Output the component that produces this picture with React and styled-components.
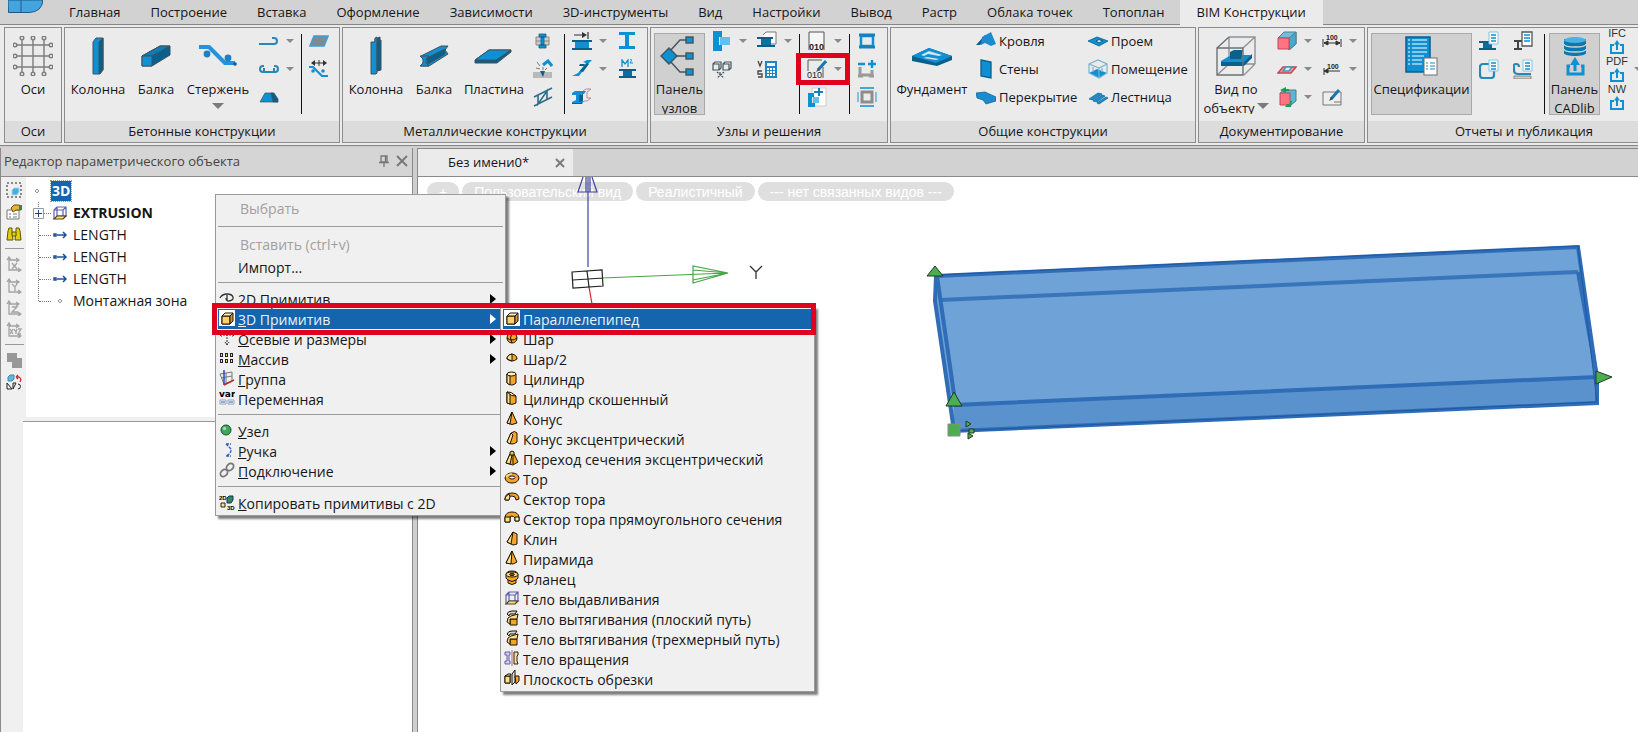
import React, { useState } from 'react'
import styled, { createGlobalStyle } from 'styled-components';

const BLUE = '#0e90d2'
const DARK = '#0b5f8b'
const EDGE = '#41535e'
const GOLD = '#f5a52a'
const CREAM = '#ffe08a'

// 40x40 drawings for the large ribbon buttons
const bigIcons = {
    axes: (
        <g fill="none" stroke="#7d7d7d" strokeWidth="1.4">
            <path d="M4 9H36M4 20H36M4 31H36M9 4V36M20 4V36M31 4V36" />
            {[9, 20, 31].map((n) => (
                <g key={n} fill="#eee">
                    <circle cx={n} cy="2" r="1.8" /><circle cx={n} cy="38" r="1.8" />
                    <circle cx="2" cy={n} r="1.8" /><circle cx="38" cy={n} r="1.8" />
                </g>
            ))}
        </g>
    ),
    column: (
        <g stroke={EDGE} strokeWidth="1">
            <path d="M15 6l3-4h7v32l-3 4h-7z" fill={BLUE} />
            <path d="M21 6l4-4v32l-4 4z" fill={DARK} />
        </g>
    ),
    beam: (
        <g stroke={EDGE} strokeWidth="1">
            <path d="M6 20l18-10h10v9l-18 11H6z" fill={DARK} />
            <path d="M6 20l18-10h10L16 20z" fill="#0b7cb5" />
            <path d="M6 20h10v10H6z" fill={BLUE} />
        </g>
    ),
    rebar: (
        <g>
            <path d="M1 11h10l16 16h10" fill="none" stroke="#2593dc" strokeWidth="4" strokeLinejoin="round" />
            <circle cx="9" cy="18" r="3.4" fill="#1a82c4" />
            <circle cx="30" cy="22" r="3.4" fill="#1a82c4" />
            <circle cx="37" cy="28" r="1.8" fill={DARK} />
        </g>
    ),
    steelColumn: (
        <g stroke={EDGE} strokeWidth="1">
            <path d="M19 3l5-2v33l-5 1z" fill={DARK} />
            <path d="M15 6h4V2l2-1v36l-1 1h-5z" fill={BLUE} />
            <path d="M21 6l4-2v30l-4 1z" fill={DARK} />
        </g>
    ),
    steelBeam: (
        <g stroke={EDGE} strokeWidth="1">
            <path d="M7 20l20-10h7l-3 4 3 4-19 12H7l3-5z" fill={BLUE} />
            <path d="M13 22l18-9v5l-17 10z" fill={DARK} />
            <path d="M6 20h9l-3 3v4l3 3H6l3-3v-4z" fill={BLUE} />
        </g>
    ),
    plate: (
        <g stroke={EDGE} strokeWidth="1">
            <path d="M1 24L15 14h22v2L23 27H1z" fill={DARK} />
            <path d="M1 24L15 14h22L22 24z" fill={BLUE} />
        </g>
    ),
    nodes: (
        <g stroke={EDGE} strokeWidth="1.4">
            <path d="M10 15L20 4h8M14 20h14M10 25l10 11h8" fill="none" />
            <path d="M9 12l8 8-8 8-8-8z" fill={BLUE} />
            <rect x="26" y="1" width="7" height="6" fill={BLUE} />
            <rect x="26" y="17" width="7" height="6" fill={BLUE} />
            <rect x="26" y="33" width="7" height="6" fill={BLUE} />
        </g>
    ),
    foundation: (
        <g>
            <path d="M0 20l17-8 23 8v4L25 30 0 25z" fill={DARK} />
            <path d="M0 20l17-8 23 8-16 7z" fill={BLUE} />
            <path d="M9 19l8-4 13 4-3 1-11-2-4 2zM11 22l4-1 12 2-3 1z" fill="#d4e4ed" />
        </g>
    ),
    objectView: (
        <g stroke="#8f9396" strokeWidth="1.4" fill="none">
            <path d="M13 1h26v27M13 1v27h26M13 28L1 39M39 28l-11 11M39 1L27 12" />
            <path d="M5 25l10-6h20l-6 9H5z" fill={BLUE} stroke="none" />
            <path d="M5 26h23l8-8v4l-8 8H5z" fill={DARK} stroke="none" />
            <path d="M14 16l4-2h9l-2 9H14z" fill={DARK} stroke="none" />
            <path d="M1 12h26v27H1zM1 12L13 1" stroke="#6e7274" />
        </g>
    ),
    spec: (
        <g>
            <rect x="4" y="1" width="24" height="35" fill={BLUE} stroke={DARK} strokeWidth="1.5" />
            <path d="M6 4h2M10 4h15M6 8h2M10 8h15M6 12h2M10 12h15M6 16h2M10 16h15M6 20h2M10 20h12M6 24h2M10 24h10M6 28h2M10 28h10" stroke="#fff" strokeWidth="1.2" />
            <rect x="22" y="22" width="13" height="17" fill="#fff" stroke="#6f6f6f" />
            <path d="M24 27h2M28 27h5M24 30h2M28 30h5M24 33h2M28 33h5" stroke={BLUE} strokeWidth="1.2" />
        </g>
    ),
    cadlib: (
        <g>
            <path d="M9 3v14c0 4 22 4 22 0V3z" fill="#0b78b0" />
            <ellipse cx="20" cy="4" rx="11" ry="3" fill="#46b2e6" />
            <path d="M9 8c0 4 22 4 22 0M9 13c0 4 22 4 22 0" fill="none" stroke="#d4d4d4" strokeWidth="1.3" />
            <path d="M15 30h-2v8h15v-8h-2" fill="none" stroke={BLUE} strokeWidth="3" />
            <path d="M20 35V27" stroke={BLUE} strokeWidth="3" />
            <path d="M20 21l5 8H15z" fill={BLUE} />
        </g>
    ),
}

const exportArrow = (
    <g>
        <path d="M7 10H4v8h12v-8h-3" fill="none" stroke={BLUE} strokeWidth="2" />
        <path d="M10 15V9" stroke={BLUE} strokeWidth="2" />
        <path d="M10 5l3 4.500H7z" fill={BLUE} />
    </g>
)

// 20x20 drawings for the small ribbon buttons
const smallIcons = {
    hook: <path d="M0 13h15q3 0 3-3t-3-3h-2" fill="none" stroke="#2787b5" strokeWidth="2" />,
    clamp: <path d="M5 7H4q-3 0-3 3t3 3h12q3 0 3-3t-3-3h-1M5 9v3M15 9v3" fill="none" stroke="#2787b5" strokeWidth="2" />,
    slab: (
        <g stroke={EDGE} strokeWidth=".7">
            <path d="M1 15L6 6h8l5 9z" fill={BLUE} /><path d="M12 6h3l4 6v3h-5z" fill={DARK} />
        </g>
    ),
    surface: <path d="M5 5h14l-4 10H1z" fill="#808a90" stroke="#3aa0dc" strokeWidth="1.6" />,
    moveRebar: (
        <g>
            <path d="M3 4h14M10 1v6" stroke="#333" /><path d="M6 1v6L2 4zM14 1v6l4-3z" fill="#333" />
            <path d="M0 8h4l9 9h6" fill="none" stroke={BLUE} strokeWidth="2.2" />
            <circle cx="4" cy="12" r="1.800" fill={BLUE} /><circle cx="14" cy="12" r="1.8" fill={BLUE} />
        </g>
    ),
    bolt: (
        <g>
            <path d="M3 6h13v8H3zM3 10h13" fill="#ccc" stroke="#888" />
            <path d="M6 3h7v3H6zM6 14h7v3H6zM8 6h3v8H8z" fill={BLUE} stroke={DARK} strokeWidth=".8" />
        </g>
    ),
    weld: (
        <g>
            <path d="M0 13h19v6H0z" fill="#b9b9b9" /><path d="M7 12h5l-2 6z" fill={DARK} />
            <path d="M10 6l5-4 4 5" fill="none" stroke={BLUE} strokeWidth="3" />
            <path d="M4 3l3 4M3 9l4 1M10 8v3M14 9l-2 2" stroke="#777" />
        </g>
    ),
    truss: <path d="M1 10L19 1M1 19l18-9M5 8v9l9-13v8M1 10l4-2" fill="none" stroke="#2f6e8c" strokeWidth="1.6" />,
    trim: (
        <g>
            <path d="M0 9h20v2H0zM0 17h20v2H0z" fill={DARK} /><path d="M3 11h14v6H3z" fill={BLUE} />
            <path d="M2 4h10M16 1v7" stroke="#333" strokeWidth="1.2" /><path d="M10 1l5 3-5 3z" fill="#333" />
        </g>
    ),
    cut: (
        <g>
            <path d="M0 17l6-3 8-10-3-1 4-2h5l-3 3-7 9-3 4z" fill={BLUE} /><path d="M8 12l7-8 2 1-6 8zM8 5h5l-1 2H7z" fill={DARK} />
        </g>
    ),
    joint: (
        <g>
            <path d="M11 4l3-2h5l-4 3v6h4l-4 3h-3" fill="none" stroke="#b98a9c" />
            <path d="M0 6l3-2h11l-2 3H9v7h3l-2 3H0v-2l4-2V8H0z" fill={BLUE} /><path d="M7 8l4-1v7l-4 1zM0 16h10v1H0z" fill={DARK} />
        </g>
    ),
    profile: <path d="M2 1h16v3h-6v11h6v3H2v-3h6V4H2z" fill={BLUE} />,
    area: (
        <g>
            <path d="M2 10h17v2H2zM2 17h17v2H2z" fill={DARK} /><path d="M6 12h9v5H6z" fill="#0b6c9f" />
            <path d="M5 8V1l3 4 3-4v7" fill="none" stroke={BLUE} strokeWidth="1.3" /><path d="M13 0q3 0 0 4h3" fill="none" stroke={BLUE} />
        </g>
    ),
    library: <g><path d="M1 0h9v6H7v8h3v6H1z" fill={BLUE} /><path d="M8 6h10v8H8z" fill="#62c0ee" /></g>,
    sheetBeam: (
        <g>
            <path d="M6 4l3-3h10v12h-5" fill="#fff" stroke="#777" /><path d="M0 6h16v2H0zM0 14h18v2H0z" fill={DARK} /><path d="M4 8h10v6H4z" fill="#0b6f9f" />
        </g>
    ),
    cubes: (
        <g fill="none" stroke={EDGE} strokeWidth="1.2">
            <path d="M1 5h6v6H1zM11 5h6v6h-6zM1 5l2-2h6v6l-2 2M11 5l2-2h6v6l-2 2" />
            <path d="M5 13l7 6M12 13l-7 6M8 13v2" strokeDasharray="2 1" />
        </g>
    ),
    calculator: (
        <g>
            <path d="M1 2l2 5 2-5M5 12H1v3h4v3H1" fill="none" stroke="#444" strokeWidth="1.300" />
            <path d="M8 2h12v17H8z" fill="#1c87c2" />
            <path d="M10 4h8v3h-8zM10 9h2v2h-2zM13 9h2v2h-2zM16 9h2v2h-2zM10 12h2v2h-2zM13 12h2v2h-2zM16 12h2v2h-2zM10 15h2v2h-2zM13 15h2v2h-2zM16 15h2v2h-2z" fill="#fff" />
        </g>
    ),
    sheet: (
        <g>
            <path d="M2 19V1h15v18" fill="#f6f6f6" stroke="#555" />
            <text x="2" y="19" fontSize="9" fontFamily="Liberation Sans" fontWeight="700" fill="#222">010</text>
        </g>
    ),
    sheetEdit: (
        <g>
            <path d="M16 8v11M1 12V1h14" fill="none" stroke="#555" />
            <path d="M19 2l-8 9" stroke="#1876b4" strokeWidth="3" /><path d="M11 9l-2 4 4-2z" fill="#555" />
            <text x="0" y="19" fontSize="9" fontFamily="Liberation Sans" fill="#222">010</text>
        </g>
    ),
    sheetAdd: (
        <g>
            <path d="M5 1h14v18H5z" fill="#fff" stroke="#ccc" />
            <path d="M1 6h6v4H5v6h3v4H1z" fill={BLUE} /><path d="M6 10h6v6H6z" fill="#62c0ee" />
            <path d="M7 5h9M12 1v8" stroke="#1680bd" strokeWidth="2" />
        </g>
    ),
    frame: <g><path d="M4 5h12v10H4z" fill="none" stroke={BLUE} strokeWidth="2.500" /><path d="M2 4h16M2 16h16" stroke="#1680bd" strokeWidth="3" /></g>,
    frameAdd: <g><path d="M3 8v8h12v-5M1 17h5M12 17h5" fill="none" stroke="#9a9a9a" strokeWidth="3" /><path d="M11 5h8M15 1v8M1 5h7" stroke={BLUE} strokeWidth="2.4" /></g>,
    frameGroup: (
        <g fill="none">
            <path d="M5 5h10v10H5z" stroke="#8d8d8d" strokeWidth="3" /><path d="M3 1h14M3 19h14" stroke={BLUE} strokeWidth="1.6" /><path d="M1 5v10M19 5v10" stroke="#68b5df" strokeWidth="1.6" />
        </g>
    ),
    roof: <g><path d="M0 14L9 4l3 3-8 7z" fill={DARK} /><path d="M6 6l9-5 5 12-5 2-6-3-4 2z" fill="#1b8ccf" /></g>,
    wall: <path d="M5 1l10 2v16L5 17z" fill={BLUE} stroke={DARK} strokeWidth="1.3" />,
    floor: <path d="M0 6l9-1 11 5v4l-10 3-3-4-6-2z" fill="#1b8ccf" stroke={DARK} strokeWidth=".7" />,
    opening: <g><path d="M0 10l9-4 11 4-9 5z" fill={BLUE} stroke={DARK} strokeWidth=".8" /><path d="M8 10l3-1.500 4 1.500-4 2z" fill="#ddd" stroke={DARK} /></g>,
    room: (
        <g fill="none" stroke="#7ab3cf" strokeWidth="1.200">
            <path d="M1 14l8-4 10 4-8 5z" fill={BLUE} stroke="none" />
            <path d="M1 5l9-4 9 4v9l-8 5-10-5zM1 5l10 4 8-4M11 9v10M5 8v5M14 9v4" />
        </g>
    ),
    stairs: <g fill="#1b8ccf" stroke={DARK} strokeWidth=".7"><path d="M1 12l9-6 4 1-9 6zM5 14l9-6 3 1-8 6zM9 16l9-6 2 1-9 6z" /></g>,
    viewFront: <g stroke="#507f92" strokeWidth="1"><path d="M7 1h12v12l-7 6V7H1z" fill="#6fbfdc" /><path d="M12 7l7-6v12l-7 6z" fill="#4aa6cc" /><path d="M1 7h11v11H1z" fill="#ff7484" stroke="#c94452" /></g>,
    viewPlan: <g stroke="#c94452" fill="none" strokeWidth="1.500"><path d="M1 14l5-6h13l-5 6z" fill="#ff98a2" /><path d="M6 12l3-4h6l-3 4z" stroke="#3d9ebb" fill="#d9eef4" /></g>,
    viewSection: <g><path d="M3 6l4-3h12v11l-5 4z" fill="#5ab6d6" stroke="#4d7f92" /><path d="M3 6h10v12H3z" fill="#ff7484" stroke="#c94452" /><path d="M3 3l6-3v2h3v2H9v2zM10 17h3v-3h2l-1 6H8z" fill="#1c9b59" /></g>,
    dimension: <g stroke="#333"><path d="M1 8v8M19 8v8M2 12h16" /><path d="M2 12l4-2v4zM18 12l-4-2v4z" fill="#333" /><text x="4" y="9" fontSize="7" fontWeight="700" fontFamily="Liberation Sans" fill="#222" stroke="none">100</text></g>,
    leader: <g stroke="#333"><path d="M2 9v7M3 12h15" /><path d="M2 12l4-2v4z" fill="#333" /><text x="5" y="10" fontSize="7" fontWeight="700" fontFamily="Liberation Sans" fill="#222" stroke="none">100</text></g>,
    note: <g><path d="M1 5h18v13H1z" fill="#eee" stroke="#777" /><path d="M12 15h7" stroke="#777" /><path d="M17 3L9 12" stroke="#1876b4" strokeWidth="3" /><path d="M9 10l-2 4 4-2z" fill="#444" /></g>,
    specBeam: <g><path d="M0 10h17v2H0zM0 17h17v2H0z" fill={DARK} /><path d="M4 12h9v5H4z" fill="#0b6c9f" /><path d="M10 1h9v12h-9z" fill="#fff" stroke="#80c4e6" /><path d="M12 4h5M12 7h5M12 10h5" stroke={BLUE} strokeWidth="1.3" /></g>,
    specProfile: <g><path d="M1 10h8M1 18h8M5 10v8" stroke="#444" strokeWidth="2" /><path d="M9 1h10v14H9z" fill="#fff" stroke="#555" strokeWidth="1.3" /><path d="M11 4h6M11 7h6M11 10h6" stroke={BLUE} strokeWidth="1.3" /></g>,
    specHook: <g><rect x="1" y="5" width="14" height="14" rx="3" fill="none" stroke="#2787b5" strokeWidth="2.200" /><path d="M10 1h9v11h-9z" fill="#fff" stroke="#80c4e6" /><path d="M12 4h5M12 7h5M12 10h5" stroke={BLUE} strokeWidth="1.3" /></g>,
    specRebar: <g><path d="M6 8q0-3-3-3T1 8v3q0 4 4 4h13" fill="none" stroke="#2787b5" strokeWidth="2.200" /><path d="M10 1h9v11h-9z" fill="#fff" stroke="#80c4e6" /><path d="M12 4h5M12 7h5M12 10h5" stroke={BLUE} strokeWidth="1.3" /><path d="M1 17h17v3H1z" fill="#ccc" stroke="#888" /></g>,
}

// 16x16 drawings: menus, tree and the dock's tool strip
const solid = (d, extra) => <g stroke="#1c1204" strokeWidth="1" strokeLinejoin="round"><path d={d} fill={GOLD} />{extra}</g>
const axisArrows = (path) => <g fill="none" stroke="#a3a3a3" strokeWidth="1.3"><path d="M3 1v13h12M1 4l2-3 2 3M12 12l3 2-3 2M3 4h9M10 2l3 2-3 2" /><path d={path} /></g>

const tinyIcons = {
    curve2d: <path d="M1 8q2-4 7-4t6 3-4 4q-3 0-3-3M8 5v6" fill="none" stroke="#333" strokeWidth="1.3" />,
    box: solid('M3 6h8v8H3z', <><path d="M3 6h8v8H3z" fill="#ffcf6b" /><path d="M3 6l3-3h8l-3 3z" fill="#fff0b8" /><path d="M11 6l3-3v8l-3 3z" fill="#d8962a" /></>),
    axial: <path d="M8 1v14M1 5h14M3 3l-2 2 2 2M13 3l2 2-2 2M6 12l2 3 2-3" fill="none" stroke="#333" strokeDasharray="2 1" />,
    array: <g fill="#fbd96b" stroke="#222">{[1, 6, 11].map((x) => [3, 9].map((y) => <rect key={x + '-' + y} x={x + 0.5} y={y + 0.5} width="2" height="3" />))}</g>,
    group: <g fill="none" stroke="#777"><path d="M1 4l12-2v9L5 14zM7 3v10M2 8l11-2" /><path d="M5 0v15" stroke="#2c49c0" strokeWidth="1.5" /><path d="M5 15l10-5" stroke="#b62b2b" strokeWidth="1.500" /></g>,
    variable: <g><text x="0" y="7" fontSize="9" fontWeight="700" fontFamily="DejaVu Sans" fill="#000">var</text><path d="M1 10h6v4H1zM9 10h6v4H9z" fill="#fff" stroke="#8ba3c4" /><path d="M2 12h4M10 12h4" stroke="#2c5b9c" /></g>,
    node: <g><circle cx="7" cy="8" r="5" fill="#3fa65a" stroke="#14532a" /><circle cx="5.500" cy="6.500" r="1.700" fill="#9fdcae" /></g>,
    grip: <path d="M7 2h5M7 2l3 3q4 3 0 7l-3 2h5" fill="none" stroke="#2d62b5" strokeWidth="1.400" strokeDasharray="3 1" />,
    link: <g fill="none" stroke="#777" strokeWidth="1.8"><ellipse cx="5" cy="11" rx="4" ry="3" transform="rotate(-45 5 11)" /><ellipse cx="11" cy="5" rx="4" ry="3" transform="rotate(-45 11 5)" /></g>,
    copy2d: <g><text x="0" y="6" fontSize="6" fontWeight="700" fontFamily="Liberation Sans">2D</text><text x="8" y="16" fontSize="6" fontWeight="700" fontFamily="Liberation Sans">3D</text><path d="M2 9h4v4H2z" fill={CREAM} stroke="#222" /><path d="M8 4l2-2h4v4l-2 3H8z" fill="#2f8b52" stroke="#14306a" /></g>,
    sphere: solid('M8 3a5 5 0 1 1 0 10a5 5 0 1 1 0-10z', <path d="M3 8q5 4 10 0M8 3q-3 5 0 10" fill="none" />),
    halfSphere: solid('M3 9q0-4 5-5 5 1 5 5-5 4-10 0z', <path d="M8 4v7L3 9q0-4 5-5z" fill={CREAM} />),
    cylinder: solid('M3 4v9q5 4 9 0V4z', <><path d="M3 4v9l3 2V5z" fill={CREAM} /><ellipse cx="7.500" cy="4" rx="4.500" ry="2" fill="#ffedb6" /></>),
    bevel: solid('M3 2v11q5 3 9 0V6z', <><path d="M3 2v11l3 1V4z" fill={CREAM} /><path d="M3 2q4-1 9 4-4 1-9-4z" fill="#ffedb6" /></>),
    cone: solid('M8 2L3 13q5 3 10 0z', <path d="M8 2L3 13l3 1z" fill={CREAM} />),
    eccentric: solid('M7 3q4-3 6 0v9q-5 4-10 0z', <path d="M7 3l-4 9 3 2 3-9z" fill={CREAM} />),
    transition: solid('M6 4h4l4 8-5 3-7-2z', <><path d="M6 4L2 13l4 1 2-9z" fill={CREAM} /><path d="M6 2q2-2 4 0v3H6zM9 5v9" fill="#e8c66d" /></>),
    torus: solid('M1 8q1-5 7-5t7 5q-1 5-7 5t-7-5z', <><ellipse cx="8" cy="7.500" rx="3" ry="1.5" fill="#fff" /><path d="M2 7q2-3 6-3" stroke={CREAM} strokeWidth="1.500" fill="none" /></>),
    torusSector: solid('M1 9q0-6 7-6t7 6l-3 1q0-4-4-4t-3 4H1z', <path d="M1 9q0-3 4-5l1 3-1 3H1z" fill={CREAM} />),
    torusRect: solid('M1 7q1-5 7-5t7 5v4h-4V8q-1-2-4-2l-1 2v4H1z', <><path d="M1 7h5v5H1z" fill={CREAM} /><path d="M11 7h4v4h-4z" fill="#fff0b8" /></>),
    wedge: solid('M9 2l4 2v10l-4 1-6-3z', <path d="M9 2L3 12l4 2z" fill={CREAM} />),
    pyramid: solid('M8 1l5 11-4 2-7-1z', <path d="M8 1L2 13l5 1z" fill={CREAM} />),
    flange: solid('M2 5q0-4 6-4t6 4v3l-2 2v3q-4 3-8 0v-3L2 8z', <><path d="M4 10q4 3 8 0" fill="none" /><ellipse cx="8" cy="4.500" rx="6" ry="2.500" fill={CREAM} /><ellipse cx="8" cy="4.500" rx="2.500" ry="1" fill="#a6670a" /></>),
    extrude: <g stroke="#5c60ad" fill="none" strokeWidth="1.200"><path d="M5 2h9v9H5zM2 14V5l3-3M11 14V5l3-3M2 5h9" /><path d="M2 14l3-3h9l-3 3z" fill={CREAM} stroke="#4a4216" /></g>,
    sweep: solid('M6 9h7v6H6z', <><path d="M4 8l3-2 7-2-1 5H6v5L3 12z" fill={CREAM} /><path d="M3 4q1-3 5-3h5l-2 3H6l-1 2z" fill="#d9d5d0" /></>),
    revolve: <g><path d="M1 2h5v3H5v6h1v3H1v-3h2V5H1z" fill="#d5cdf1" stroke="#5c60ad" /><path d="M8 0v16" stroke="#b96060" /><path d="M10 2h4v3l-1 1v5l1 3h-4z" fill={CREAM} stroke="#222" /></g>,
    clip: solid('M1 6h5v7H1z', <><path d="M1 6h5v7H1z" fill={CREAM} /><path d="M1 6l3-2h3L6 6z" fill="#fff0b8" /><path d="M8 4l3-4v12l-3 3z" fill="#ddd" /><path d="M11 6h4v5l-3 3z" fill={GOLD} /></>),
    point: <path d="M8 6l2 2-2 2-2-2z" fill="#eee" stroke="#999" />,
    length: <g fill="none" stroke="#1e4f9d" strokeWidth="1.500"><path d="M2 7h2v2H2zM5 8h9M11 5l3 3-3 3" /></g>,
    select: <g><rect x="1" y="1" width="14" height="14" fill="none" stroke="#222" strokeDasharray="2 2" /><path d="M6 8l2-2h5v4l-2 3H6z" fill="#4bafdc" stroke="#9fd8ee" /></g>,
    properties: <g><path d="M1 6h12v9H1z" fill="#fff" stroke="#777" /><path d="M3 10h2M7 10h4M3 13h2M7 13h4" stroke="#777" /><path d="M5 4l3-3h5l3 2-1 3h-5l-3 2z" fill="#e3b62b" stroke="#6b5310" /><path d="M13 1h3v5h-3z" fill="#4a7a52" /></g>,
    find: <g fill="#e2cf12" stroke="#5d5500"><path d="M3 2h3v3l1 9H1l1-9z" /><path d="M10 2h3l1 3 1 9H9l1-9z" /><path d="M6 6h4v4H6z" /></g>,
    axisX: axisArrows('M6 7l5 6M11 7l-5 6'),
    axisY: axisArrows('M6 6l3 3 2-3M9 9v4'),
    axisZ: axisArrows('M6 7h5l-5 5h6'),
    axisXyz: axisArrows('M4 7l3 5M7 7l-3 5M8 7l2 3 1-3M10 10v2M12 7h3l-3 5h3'),
    union: <g fill="#989898"><path d="M1 1h10v9H1z" /><path d="M6 6h10v10H6z" /></g>,
    replace: <g><path d="M2 3l2-2h4v4L6 7H2z" fill="#5bb9de" stroke="#3d8cae" /><path d="M10 3h3q3 2 1 5M10 3l2-2M10 3l2 2" fill="none" stroke="#c52f2f" strokeWidth="1.3" /><path d="M1 9v6h5zM7 9h3l-3 6zM12 10a2.500 2.500 0 1 1-.1 5" fill="none" stroke="#222" /></g>,
}

const Icon = ({ set, name, size }) => (
    <svg width={size} height={size} viewBox={`0 0 ${size} ${size}`} aria-hidden="true">{set[name]}</svg>
)

const Tiny = ({ name }) => <Icon set={tinyIcons} name={name} size={16} />

const Caret = ({ label }) => (
    <CaretButton aria-label={label}>
        <svg width="8" height="4" viewBox="0 0 8 4"><path d="M0 0h8L4 4z" fill="#8a8a8a" /></svg>
    </CaretButton>
)

const BigArrow = () => <svg width="12" height="6" viewBox="0 0 12 6"><path d="M0 0h12L6 6z" fill="#7b7b7b" /></svg>

const Big = ({ icon, width, lines, arrow, pressed, inset }) => (
    <BigButton $width={width} $pressed={pressed} $inset={inset}>
        <Icon set={bigIcons} name={icon} size={40} />
        {lines.map((line, i) => (
            <BigLabel key={line}>{line}{arrow && i > 0 && <BigArrow />}</BigLabel>
        ))}
        {arrow && lines.length === 1 && <BigLabel><BigArrow /></BigLabel>}
    </BigButton>
)

// rows: [icon, tooltip, hasDropdown]
const Tools = ({ rows, left }) => (
    <Stack $left={left}>
        {rows.map(([icon, title, menu]) => (
            <StackRow key={icon}>
                <SmallButton title={title} aria-label={title}><Icon set={smallIcons} name={icon} size={20} /></SmallButton>
                {menu && <Caret label={title + ': варианты'} />}
            </StackRow>
        ))}
    </Stack>
)

const LabelledTools = ({ rows, left, width }) => (
    <Stack $left={left} $width={width}>
        {rows.map(([icon, label]) => (
            <TextButton key={icon}><Icon set={smallIcons} name={icon} size={20} />{label}</TextButton>
        ))}
    </Stack>
)

const Group = ({ title, width, children }) => (
    <Panel $width={width}>
        <PanelBody>{children}</PanelBody>
        <PanelTitle>{title}</PanelTitle>
    </Panel>
)

const tabs = ['Главная', 'Построение', 'Вставка', 'Оформление', 'Зависимости', '3D-инструменты', 'Вид', 'Настройки', 'Вывод', 'Растр', 'Облака точек', 'Топоплан', 'BIM Конструкции']

const Ribbon = () => (
    <RibbonBar>
        <Group title="Оси" width={58}>
            <Big icon="axes" width={56} lines={['Оси']} />
        </Group>
        <Group title="Бетонные конструкции" width={276}>
            <Big icon="column" width={66} lines={['Колонна']} />
            <Big icon="beam" width={50} lines={['Балка']} />
            <Big icon="rebar" width={74} lines={['Стержень']} arrow />
            <Tools left={4} rows={[['hook', 'Деталь', true], ['clamp', 'Хомут', true], ['slab', 'Фундаментный блок']]} />
            <Divider $before={4} $after={7} />
            <Tools left={0} rows={[['surface', 'Поверхность'], ['moveRebar', 'Сдвиг арматуры']]} />
        </Group>
        <Group title="Металлические конструкции" width={306}>
            <Big icon="steelColumn" width={66} lines={['Колонна']} />
            <Big icon="steelBeam" width={50} lines={['Балка']} />
            <Big icon="plate" width={70} lines={['Пластина']} />
            <Tools left={4} rows={[['bolt', 'Болт'], ['weld', 'Сварка'], ['truss', 'Ферма']]} />
            <Divider $before={11} $after={7} />
            <Tools left={0} rows={[['trim', 'Подрезка', true], ['cut', 'Рез', true], ['joint', 'Стык']]} />
            <Tools left={7} rows={[['profile', 'Профиль'], ['area', 'Площадь окраски']]} />
        </Group>
        <Group title="Узлы и решения" width={238}>
            <Big icon="nodes" width={51} lines={['Панель', 'узлов']} pressed inset={3} />
            <Tools left={7} rows={[['library', 'Узел', true], ['cubes', 'Разобрать']]} />
            <Tools left={7} rows={[['sheetBeam', 'Решение', true], ['calculator', 'Расчет']]} />
            <Divider $before={4} $after={7} />
            <ToolsWithMark>
                <Tools left={0} rows={[['sheet', 'Параметрический объект', true], ['sheetEdit', 'Редактировать', true], ['sheetAdd', 'Добавить']]} />
                <ToolMark />
            </ToolsWithMark>
            <Divider $before={4} $after={7} />
            <Tools left={0} rows={[['frame', 'Рамка'], ['frameAdd', 'Добавить рамку'], ['frameGroup', 'Группа рамок']]} />
        </Group>
        <Group title="Общие конструкции" width={306}>
            <Big icon="foundation" width={82} lines={['Фундамент']} />
            <LabelledTools left={3} width={112} rows={[['roof', 'Кровля'], ['wall', 'Стены'], ['floor', 'Перекрытие']]} />
            <LabelledTools left={0} rows={[['opening', 'Проем'], ['room', 'Помещение'], ['stairs', 'Лестница']]} />
        </Group>
        <Group title="Документирование" width={167}>
            <Big icon="objectView" width={74} lines={['Вид по', 'объекту']} arrow />
            <Tools left={4} rows={[['viewFront', 'Фасад', true], ['viewPlan', 'План', true], ['viewSection', 'Разрез', true]]} />
            <Tools left={7} rows={[['dimension', 'Размер', true], ['leader', 'Выноска', true], ['note', 'Примечание']]} />
        </Group>
        <Group title="Отчеты и публикация" width={314}>
            <Big icon="spec" width={101} lines={['Спецификации']} pressed inset={3} />
            <Tools left={7} rows={[['specBeam', 'Ведомость балок'], ['specHook', 'Ведомость хомутов']]} />
            <Tools left={14} rows={[['specProfile', 'Ведомость профилей'], ['specRebar', 'Ведомость арматуры']]} />
            <Divider $before={11} $after={4} />
            <Big icon="cadlib" width={51} lines={['Панель', 'CADlib']} pressed />
            <Stack $left={7}>
                {['IFC', 'PDF', 'NW'].map((format) => (
                    <StackRow key={format}>
                        <ExportButton>{format}<svg width="20" height="15" viewBox="0 4 20 15" aria-hidden="true">{exportArrow}</svg></ExportButton>
                        {format === 'PDF' && <Caret label="PDF: варианты" />}
                    </StackRow>
                ))}
            </Stack>
        </Group>
    </RibbonBar>
)

const dockTools = [
    ['select', 'Выбор'], ['properties', 'Свойства'], ['find', 'Найти'], null,
    ['axisX', 'Ось X'], ['axisY', 'Ось Y'], ['axisZ', 'Ось Z'], ['axisXyz', 'Оси XYZ'], null,
    ['union', 'Объединить'], ['replace', 'Заменить'],
]

const Dock = () => (
    <DockPanel>
        <DockHeader>
            <DockTitle>Редактор параметрического объекта</DockTitle>
            <HeaderButton aria-label="Закрепить">
                <svg width="12" height="12" viewBox="0 0 12 12"><path d="M3 1h6v6H3zM7.500 1v6M1 7.500h10M6 8v4" fill="none" stroke="#777" strokeWidth="1.300" /></svg>
            </HeaderButton>
            <HeaderButton aria-label="Закрыть">
                <svg width="12" height="12" viewBox="0 0 12 12"><path d="M1 1l10 10M11 1L1 11" stroke="#777" strokeWidth="1.800" /></svg>
            </HeaderButton>
        </DockHeader>
        <DockBody>
            <DockStrip>
                {dockTools.map((tool, i) => tool
                    ? <StripButton key={tool[0]} title={tool[1]} aria-label={tool[1]}><Tiny name={tool[0]} /></StripButton>
                    : <StripLine key={i} />)}
            </DockStrip>
            <DockPanes>
                <Tree>
                    <li><TreeRow $root><Tiny name="point" /><TreeLabel $selected>3D</TreeLabel></TreeRow></li>
                    <li>
                        <TreeBranch>
                            <li>
                                <TreeRow>
                                    <Expander aria-label="Развернуть EXTRUSION">
                                        <svg width="11" height="11" viewBox="0 0 11 11"><path d="M.5.5h10v10H.5z" fill="#fff" stroke="#999" /><path d="M2 5.500h7M5.500 2v7" stroke="#1b3f8c" /></svg>
                                    </Expander>
                                    <Tiny name="extrude" /><TreeLabel $bold>EXTRUSION</TreeLabel>
                                </TreeRow>
                            </li>
                            {[1, 2, 3].map((n) => <li key={n}><TreeRow $leaf><Tiny name="length" /><TreeLabel>LENGTH</TreeLabel></TreeRow></li>)}
                            <li><TreeRow $leaf><Tiny name="point" /><TreeLabel>Монтажная зона</TreeLabel></TreeRow></li>
                        </TreeBranch>
                    </li>
                </Tree>
                <LowerPane />
            </DockPanes>
        </DockBody>
    </DockPanel>
)

const Scene = () => (
    <SceneSvg aria-label="3D-вид">
        <g fill="none" strokeWidth="1.200">
            <path d="M170 0v90M165 0l-5 15h19l-5-15M168 0v15M172 0v15" stroke="#3f459b" />
            <path d="M184 101l126-5M275 89v17l35-10zM275 93l35 3-35 7" stroke="#46a646" />
            <path d="M171 110l3 17" stroke="#d8202a" />
            <path d="M154 95l30-2 1 16-30 2zM155 103l30-2M169 94l2 16" stroke="#222" />
        </g>
        <path d="M332 89l6 6 6-6M338 95v7" fill="none" stroke="#333" strokeWidth="1.300" />
        <path d="M519 98l641-29 20 131v25l-644 30-2-27-18-105z" fill="#6fa2d6" />
        <path d="M536 228l643-28v25l-643 28z" fill="#5992cd" />
        <g fill="none" stroke="#3975ba" strokeWidth="4">
            <path d="M522 123l638-28" />
            <path d="M518 99l642-29 19 132v24l-643 28-19-130z" stroke="#2f6db7" />
            <path d="M536 228l643-28M519 99l18 125M1160 95l19 105" stroke="#2f6db7" />
        </g>
        <path d="M518 98l642-29 19 156-643 29" fill="none" stroke="#1f58a5" strokeWidth="1" />
        <g fill="#4caf4f" stroke="#24372a">
            <path d="M509 99l8-10 8 10zM528 229l8-14 8 14zM1178 194l16 6-16 7z" />
            <path d="M530 247h12v12h-12z" stroke="#8b8a8a" />
            <path d="M548 244l5 3-5 3zM551 252h5v4h-5zM550 256l5 3-5 3z" />
        </g>
    </SceneSvg>
)

const objectMenu = [
    { label: 'Выбрать', disabled: true, tall: true },
    'line-1',
    { label: 'Вставить (ctrl+v)', disabled: true, tall: true },
    { label: 'Импорт...' },
    'line-2',
    { label: '2D Примитив', icon: 'curve2d', key: true, sub: true },
    { label: '3D Примитив', icon: 'box', key: true, sub: true },
    { label: 'Осевые и размеры', icon: 'axial', key: true, sub: true },
    { label: 'Массив', icon: 'array', key: true, sub: true },
    { label: 'Группа', icon: 'group', key: true },
    { label: 'Переменная', icon: 'variable' },
    'line-3',
    { label: 'Узел', icon: 'node', key: true },
    { label: 'Ручка', icon: 'grip', key: true, sub: true },
    { label: 'Подключение', icon: 'link', key: true, sub: true },
    'line-4',
    { label: 'Копировать примитивы с 2D', icon: 'copy2d', key: true },
]

const solidsMenu = [
    ['Параллелепипед', 'box'], ['Шар', 'sphere'], ['Шар/2', 'halfSphere'], ['Цилиндр', 'cylinder'],
    ['Цилиндр скошенный', 'bevel'], ['Конус', 'cone'], ['Конус эксцентрический', 'eccentric'],
    ['Переход сечения эксцентрический', 'transition'], ['Тор', 'torus'], ['Сектор тора', 'torusSector'],
    ['Сектор тора прямоугольного сечения', 'torusRect'], ['Клин', 'wedge'], ['Пирамида', 'pyramid'],
    ['Фланец', 'flange'], ['Тело выдавливания', 'extrude'], ['Тело вытягивания (плоский путь)', 'sweep'],
    ['Тело вытягивания (трехмерный путь)', 'sweep'], ['Тело вращения', 'revolve'], ['Плоскость обрезки', 'clip'],
].map(([label, icon]) => ({ label, icon }))

const Menu = ({ items, active, onPick }) => items.map((item) => {
    if (typeof item === 'string') return <MenuLine key={item} role="separator" />
    const { label, icon, key, sub, disabled, tall } = item
    const on = active === label
    return (
        <MenuItem key={label} role="menuitem" disabled={disabled} $active={on} $tall={tall} onMouseEnter={() => onPick(label)}>
            <MenuIcon $framed={on}>{icon && <Tiny name={icon} />}</MenuIcon>
            <MenuText $tall={tall}>{key ? <><u>{label[0]}</u>{label.slice(1)}</> : label}</MenuText>
            {sub && <svg width="6" height="10" viewBox="0 0 6 10"><path d="M0 0l6 5-6 5z" fill={on ? '#fff' : '#000'} /></svg>}
        </MenuItem>
    )
})

const App = () => {

    const [tab, setTab] = useState('BIM Конструкции');
    const [solidItem, setSolidItem] = useState('Параллелепипед');

    return (
        <Window>
            <GlobalStyle />
            <TabBar>
                <AppButton aria-label="Меню приложения">
                    <svg width="35" height="13" viewBox="0 0 35 13"><path d="M0 0h35q-1 12-14 12.500H.5z" fill="#43a5e0" stroke="#1c5a86" /><path d="M13 0v13" stroke="#1c5a86" /></svg>
                </AppButton>
                {tabs.map((name) => <Tab key={name} $active={name === tab} onClick={() => setTab(name)}>{name}</Tab>)}
                <TabRest />
            </TabBar>
            <Ribbon />
            <Workspace>
                <Dock />
                <Viewer>
                    <FileTabs>
                        <FileTab>
                            <FileName>Без имени0*</FileName>
                            <HeaderButton aria-label="Закрыть Без имени0*">
                                <svg width="10" height="10" viewBox="0 0 10 10"><path d="M1 1l8 8M9 1L1 9" stroke="#777" strokeWidth="1.800" /></svg>
                            </HeaderButton>
                        </FileTab>
                    </FileTabs>
                    <Canvas>
                        <Pills>
                            <Pill>+</Pill><Pill>Пользовательский вид</Pill><Pill>Реалистичный</Pill><Pill>--- нет связанных видов ---</Pill>
                        </Pills>
                        <Scene />
                    </Canvas>
                </Viewer>
            </Workspace>
            <ObjectMenu role="menu" aria-label="Объект">
                <Menu items={objectMenu} active="3D Примитив" onPick={() => {}} />
            </ObjectMenu>
            <SolidsMenu role="menu" aria-label="3D Примитив">
                <Menu items={solidsMenu} active={solidItem} onPick={setSolidItem} />
            </SolidsMenu>
            <MenuMark />
        </Window>
    )
}

export default App


const GlobalStyle = createGlobalStyle`
    * {
        box-sizing: border-box;
    }

    body {
        margin: 0;
        background: #cfcfcf;
        overflow: hidden;
    }

    button {
        margin: 0;
        padding: 0;
        border: 0;
        background: none;
        color: inherit;
        font: inherit;
    }

    svg {
        display: block;
        flex: none;
    }

    ul {
        margin: 0;
        padding: 0;
        list-style: none;
    }
`

const Window = styled.div`
    position: relative;
    display: flex;
    flex-direction: column;
    height: 100vh;
    overflow: hidden;
    background: #cfcfcf;
    color: #161616;
    font-family: "Open Sans", "Noto Sans", sans-serif;
    font-size: 14px;
    line-height: 20px;
    white-space: nowrap;
`

const TabBar = styled.nav`
    display: flex;
    flex: none;
    height: 25px;
    background: #d2d2d2;
    font-size: 13px;
`

const AppButton = styled.button`
    display: flex;
    align-items: flex-start;
    width: 54px;
    padding-left: 8px;
    border-bottom: 1px solid #868686;
`

const Tab = styled.button`
    padding: 0 ${({ $active }) => ($active ? 17 : 15)}px;
    border-bottom: 1px solid ${({ $active }) => ($active ? '#ebebeb' : '#868686')};
    background: ${({ $active }) => ($active ? '#ebebeb' : 'transparent')};
`

const TabRest = styled.div`
    flex: 1;
    border-bottom: 1px solid #868686;
`

const RibbonBar = styled.div`
    display: flex;
    flex: none;
    gap: 2px;
    height: 121px;
    padding: 2px 0 2px 4px;
    overflow: hidden;
    border-bottom: 1px solid #868686;
    background: #ebebeb;
    font-size: 13px;
`

const Panel = styled.section`
    display: flex;
    flex: none;
    flex-direction: column;
    width: ${({ $width }) => $width}px;
    border: 1px solid #8c8c8c;
`

const PanelBody = styled.div`
    display: flex;
    flex: 1;
    align-items: flex-start;
`

const PanelTitle = styled.div`
    height: 21px;
    background: #dcdcdc;
    text-align: center;
`

const BigButton = styled.button`
    display: flex;
    flex: none;
    flex-direction: column;
    align-items: center;
    width: ${({ $width }) => $width}px;
    height: 82px;
    margin: 5px 0 0 ${({ $inset }) => $inset || 0}px;
    padding-top: 2px;
    overflow: hidden;
    border: 1px solid ${({ $pressed }) => ($pressed ? '#a9a9a9' : 'transparent')};
    background: ${({ $pressed }) => ($pressed ? '#d0d0d0' : 'transparent')};

    svg + span {
        margin-top: 3px;
    }
`

const BigLabel = styled.span`
    display: flex;
    gap: 2px;
    align-items: center;
    flex: none;
    height: 19px;

    svg {
        margin-top: -4px;
    }
`

const Stack = styled.div`
    display: grid;
    flex: none;
    grid-auto-rows: 28px;
    width: ${({ $width }) => ($width ? $width + 'px' : 'auto')};
    margin-top: -1px;
    margin-left: ${({ $left }) => $left}px;
`

const StackRow = styled.div`
    display: flex;
    align-items: center;
    gap: 4px;
`

const SmallButton = styled.button`
    width: 20px;
    height: 20px;
`

const CaretButton = styled.button`
    display: flex;
    align-items: center;
    justify-content: center;
    width: 14px;
    height: 20px;
`

const TextButton = styled.button`
    display: flex;
    align-items: center;
    gap: 3px;
`

const ExportButton = styled.button`
    display: flex;
    flex-direction: column;
    align-items: center;
    width: 20px;
    font-family: "Liberation Sans", sans-serif;
    font-size: 11px;
    line-height: 11px;
    color: #333;
`

const Divider = styled.span`
    flex: none;
    width: 1px;
    height: 80px;
    margin: 6px ${({ $after }) => $after}px 0 ${({ $before }) => $before}px;
    background: #111;
`

const ToolsWithMark = styled.div`
    position: relative;
`

const ToolMark = styled.div`
    position: absolute;
    top: 25px;
    left: -11px;
    width: 54px;
    height: 32px;
    border: 5px solid #e2001f;
    pointer-events: none;
`

const Workspace = styled.main`
    display: flex;
    flex: 1;
    gap: 4px;
    min-height: 0;
    padding-top: 2px;
`

const DockPanel = styled.aside`
    display: flex;
    flex: none;
    flex-direction: column;
    width: 413px;
    border: solid #8a8a8a;
    border-width: 0 1px;
`

const DockHeader = styled.header`
    display: flex;
    align-items: center;
    height: 29px;
    padding: 0 1px 2px 3px;
    border-bottom: 1px solid #8a8a8a;
    background: #d5d5d5;
    color: #444;
`

const DockTitle = styled.h2`
    flex: 1;
    margin: 0;
    font-size: 13px;
    font-weight: 400;
`

const HeaderButton = styled.button`
    display: flex;
    align-items: center;
    justify-content: center;
    width: 18px;
    height: 18px;
`

const DockBody = styled.div`
    display: flex;
    flex: 1;
    background: #f0f0f0;
`

const DockStrip = styled.div`
    width: 25px;
    padding-top: 2px;
`

const StripButton = styled.button`
    display: flex;
    align-items: center;
    justify-content: center;
    width: 25px;
    height: 22px;
`

const StripLine = styled.div`
    height: 1px;
    margin: 3px 2px 4px 4px;
    background: #999;
`

const DockPanes = styled.div`
    display: flex;
    flex: 1;
    flex-direction: column;
`

const Tree = styled.ul`
    flex: none;
    height: 240px;
    padding: 3px 0 0 3px;
    background: #fff;
`

const TreeBranch = styled.ul`
    position: relative;

    &::before {
        content: '';
        position: absolute;
        top: 0;
        bottom: 11px;
        left: 9px;
        border-left: 1px dotted #777;
    }
`

const TreeRow = styled.div`
    position: relative;
    display: flex;
    align-items: center;
    gap: ${({ $root }) => ($root ? 6 : 4)}px;
    height: 22px;
    padding-left: ${({ $root, $leaf }) => ($root ? 0 : $leaf ? 23 : 4)}px;

    &::before {
        content: '';
        display: ${({ $root }) => ($root ? 'none' : 'block')};
        position: absolute;
        top: 11px;
        left: 10px;
        width: 12px;
        border-top: 1px dotted #777;
    }
`

const Expander = styled.button`
    position: relative;
    width: 15px;
`

const TreeLabel = styled.span`
    padding: 0 1px;
    font-weight: ${({ $selected, $bold }) => ($selected || $bold ? 700 : 400)};
    background: ${({ $selected }) => ($selected ? '#1464ae' : 'transparent')};
    color: ${({ $selected }) => ($selected ? '#fff' : 'inherit')};
    outline: ${({ $selected }) => ($selected ? '1px dotted #d08a30' : 'none')};
`

const LowerPane = styled.div`
    flex: 1;
    margin: 4px 0 0 -3px;
    border-top: 1px solid #999;
    background: #fff;
`

const Viewer = styled.section`
    display: flex;
    flex: 1;
    flex-direction: column;
    min-width: 0;
    border-left: 1px solid #8a8a8a;
`

const FileTabs = styled.div`
    display: flex;
    height: 29px;
    border-top: 1px solid #8a8a8a;
    border-bottom: 1px solid #8a8a8a;
    background: #d2d2d2;
`

const FileTab = styled.div`
    display: flex;
    align-items: center;
    justify-content: space-between;
    width: 155px;
    padding: 0 4px 0 30px;
    background: #ebebeb;
`

const FileName = styled.span`
    padding-bottom: 2px;
    font-size: 13px;
`

const Canvas = styled.div`
    position: relative;
    flex: 1;
    overflow: hidden;
    background: #fff;
`

const Pills = styled.div`
    display: flex;
    gap: 3px;
    padding: 5px 9px;
`

const Pill = styled.button`
    height: 19px;
    padding: 0 12px;
    border-radius: 10px;
    background: #dfdfdf;
    color: #fff;
    font-family: "Liberation Sans", sans-serif;
    font-size: 14px;
`

const SceneSvg = styled.svg`
    position: absolute;
    top: 0;
    left: 0;
    width: 100%;
    height: 100%;
    pointer-events: none;
`

const MenuBox = styled.div`
    position: absolute;
    padding: 2px;
    border: 1px solid #9b9b9b;
    background: #f0f0f0;
    box-shadow: 3px 3px 2px rgba(0, 0, 0, 0.5);
`

const ObjectMenu = styled(MenuBox)`
    top: 194px;
    left: 215px;
    width: 291px;
`

const SolidsMenu = styled(MenuBox)`
    top: 306px;
    left: 500px;
    width: 315px;
`

const MenuItem = styled.button`
    display: flex;
    align-items: center;
    width: 100%;
    height: ${({ $tall }) => ($tall ? 24 : 20)}px;
    padding: 0 7px 0 1px;
    background: ${({ $active }) => ($active ? '#1464ae' : 'transparent')};
    color: ${({ $active }) => ($active ? '#e9f2fb' : 'inherit')};
    text-align: left;

    &:disabled {
        color: #a0a0a0;
        padding-left: 3px;
    }
`

const MenuIcon = styled.span`
    flex: none;
    width: 16px;
    height: 16px;
    margin: 0 3px 2px 0;
    background: ${({ $framed }) => ($framed ? '#fff' : 'transparent')};
`

const MenuText = styled.span`
    flex: 1;
    padding-top: ${({ $tall }) => ($tall ? 0 : 2)}px;
`

const MenuLine = styled.div`
    height: 1px;
    margin: 5px 0 6px;
    background: #9b9b9b;
`

const MenuMark = styled.div`
    position: absolute;
    top: 303px;
    left: 212px;
    width: 604px;
    height: 32px;
    border: 5px solid #e2001f;
    pointer-events: none;
`
